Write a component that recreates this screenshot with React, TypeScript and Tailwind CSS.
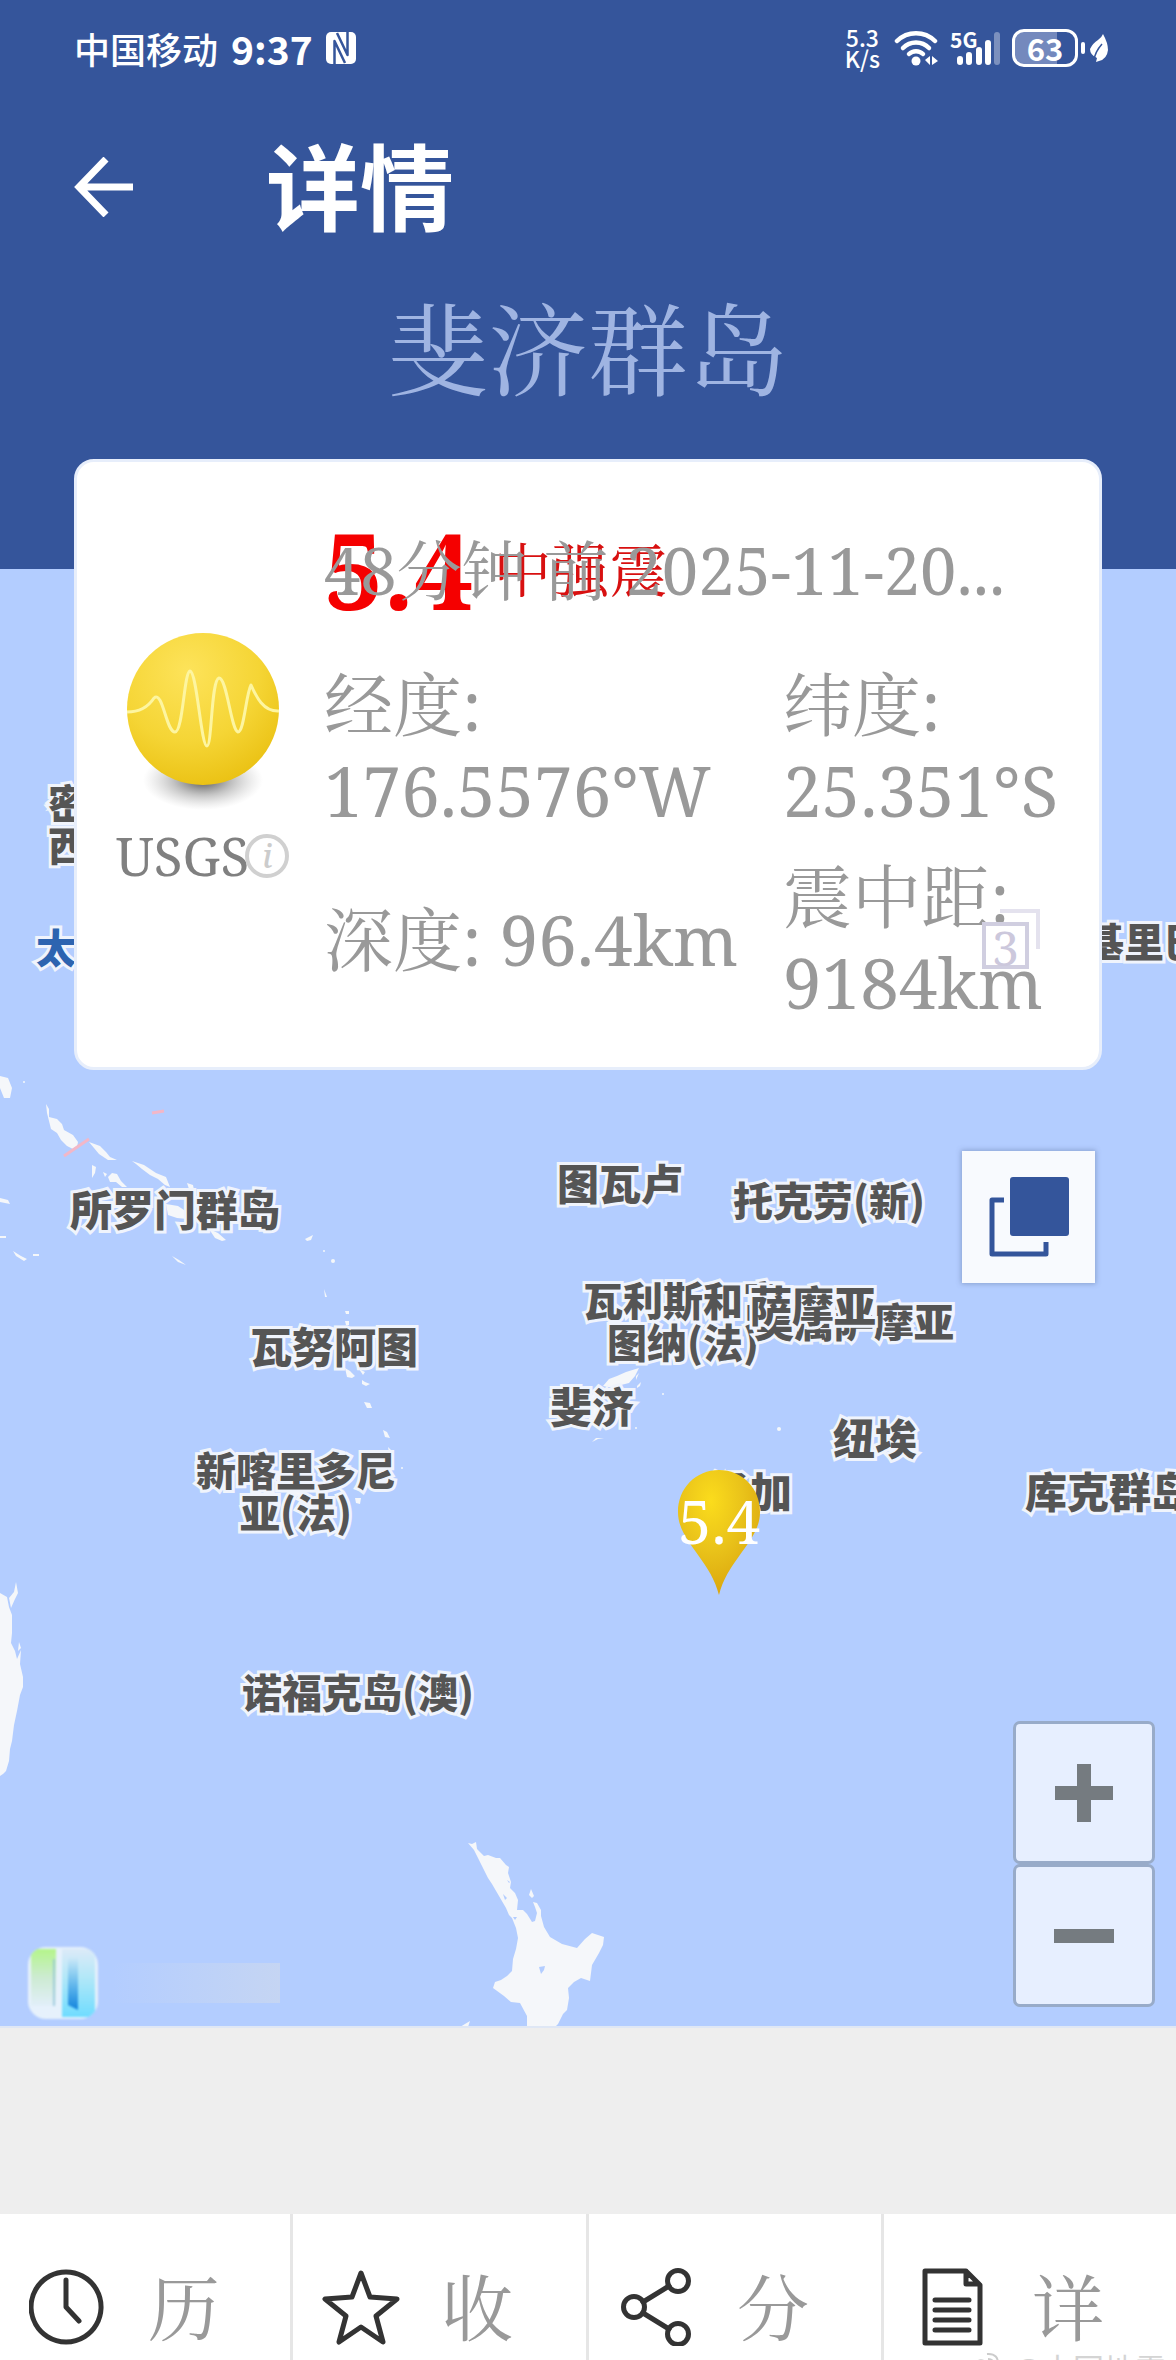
import type { ReactNode } from "react";

const SERIF = "font-['Noto_Serif','Noto_Serif_CJK_SC','Liberation_Serif','Noto_Sans_CJK_SC',serif]";
const SANS = "font-['Noto_Sans_CJK_SC',sans-serif]";

function StatusBar() {
  return (
    <div className={`flex h-[100px] items-center justify-between pr-[68px] pb-[4px] pl-[74px] text-[36px] font-medium text-white ${SANS}`}>
      <div className="flex items-center gap-[13px] leading-[40px]">
        <span>中国移动</span>
        <span className="text-[39px] font-bold">9:37</span>
        <svg viewBox="0 0 30 32" className="h-[32px] w-[30px]" fill="none" aria-label="NFC">
          <rect width="30" height="32" rx="5" fill="white" />
          <path d="M8.500 32V9L19 31M21.500 0v23L11 1" stroke="#35559b" strokeWidth="2.500" strokeLinejoin="round" />
        </svg>
      </div>
      <div className="flex items-center">
        <p className="flex flex-col items-center text-[23px] leading-[21px]">
          <span>5.3</span>
          <span>K/s</span>
        </p>
        <svg viewBox="0 0 44 36" className="ml-[14px] h-[36px] w-[44px]" fill="none" stroke="white" strokeWidth="4.5" strokeLinecap="round" aria-label="Wi-Fi">
          <path d="M3 11a27 27 0 0 1 38 0" />
          <path d="M9 18a18 18 0 0 1 26 0" />
          <path d="M15 24a10 10 0 0 1 14 0" />
          <circle cx="22" cy="31" r="4.5" fill="white" stroke="none" />
          <path d="M36 26v9l-5-5ZM38 35v-9l6 5Z" fill="white" stroke="none" />
        </svg>
        <svg viewBox="0 0 52 36" className="ml-[12px] h-[36px] w-[52px]" aria-label="5G">
          <text x="0" y="18" fill="white" fontSize="21" fontWeight="700" fontFamily="Noto Sans CJK SC, sans-serif">5G</text>
          <g stroke="white" strokeWidth="6" strokeLinecap="round">
            <path d="M10 29v3M19 25v7M29 20v12M38 13v19" />
            <path d="M47 5v27" opacity=".35" />
          </g>
        </svg>
        <div className="ml-[10px] flex items-center gap-[3px]">
          <div className="h-[38px] w-[66px] rounded-[12px] border-[3px] border-white bg-linear-to-r from-[#7489bd] from-70% to-[#35559b] to-70% text-center text-[31px] leading-[31px] font-bold">
            63
          </div>
          <div className="h-[12px] w-[4px] rounded-full bg-white" />
        </div>
        <svg viewBox="0 0 18 30" className="ml-[5px] h-[30px] w-[18px]" aria-label="省电">
          <path d="M13 1q5 9 5 16-1 9-9 11l-3 1 1-4Q0 22 0 16q3-6 8-9 4-3 5-6Z" fill="white" />
          <path d="M4 27Q5 19 12 11" stroke="#35559b" strokeWidth="1.500" fill="none" />
        </svg>
      </div>
    </div>
  );
}

function Header() {
  return (
    <header className="bg-[#35559b] pb-[145px]">
      <StatusBar />
      <div className="flex h-[174px] items-center gap-[132px] px-[74px]">
        <button type="button" aria-label="返回">
          <svg viewBox="0 0 60 60" className="h-[60px] w-[60px]" fill="none" stroke="white" strokeWidth="7">
            <path d="M59 30H6M32 2 5 30l27 28" />
          </svg>
        </button>
        <h1 className={`pb-[8px] text-[94px] leading-[100px] font-bold text-white ${SANS}`}>详情</h1>
      </div>
      <h2 className={`text-center text-[100px] leading-[150px] text-[#9fb4e2] ${SERIF}`}>斐济群岛</h2>
    </header>
  );
}

function QuakeBall() {
  return (
    <svg viewBox="0 0 180 200" className="h-[200px] w-[180px]">
      <defs>
        <radialGradient id="ball" cx=".4" cy=".25" r=".85">
          <stop offset="0" stopColor="#fde35a" />
          <stop offset=".55" stopColor="#f5d535" />
          <stop offset="1" stopColor="#e8bd0c" />
        </radialGradient>
        <radialGradient id="ballShadow">
          <stop offset="0" stopColor="#222" stopOpacity=".8" />
          <stop offset=".5" stopColor="#555" stopOpacity=".35" />
          <stop offset="1" stopColor="#999" stopOpacity="0" />
        </radialGradient>
      </defs>
      <ellipse cx="90" cy="156" rx="60" ry="30" fill="url(#ballShadow)" />
      <circle cx="90" cy="85" r="76" fill="url(#ball)" />
      <path
        d="M14 88Q32 88 41 74C50 66 53 108 62 108 70 108 71 48 77 47 84 48 88 122 94 122 99 122 98 56 106 54 114 54 118 106 125 108 131 108 133 70 138 61 143 72 150 88 166 87"
        fill="none"
        stroke="#fdf5a0"
        strokeWidth="3"
        strokeLinejoin="round"
      />
    </svg>
  );
}

function QuakeCard() {
  return (
    <article className={`relative z-10 mx-[74px] mt-[-110px] flex rounded-[20px] border-[3px] border-[#e7eefb] bg-white text-[#999] ${SERIF}`}>
      <div className="flex w-[247px] shrink-0 flex-col items-center pt-[162px] pl-[4px]">
        <QuakeBall />
        <div className="flex items-center text-[53px] leading-[64px] text-[#808080]">
          <span>USGS</span>
          <button type="button" aria-label="机构信息" className="-ml-[4px] h-[44px] w-[44px] rounded-full border-[4px] border-[#d0d0d0] text-center text-[32px] leading-[34px] font-medium text-[#ccc] italic">
            i
          </button>
        </div>
      </div>
      <div className="min-w-0 flex-1 pt-[65px] pb-[42px]">
        <div className="grid">
          <p className="flex items-center gap-[20px] leading-[86px] text-[#f50000] [grid-area:1/1]">
            <strong className="text-[105px]">5.4</strong>
            <span className="text-[58px] text-[#d81010]">中强震</span>
          </p>
          <p className="text-[65px] leading-[86px] whitespace-nowrap [grid-area:1/1]">48分钟 前 2025-11-20...</p>
        </div>
        <div className="mt-[48px] grid grid-cols-[459px_1fr] items-center gap-y-[20px] text-[69px] leading-[86px]">
          <p>经度: 176.5576°W</p>
          <p>纬度: 25.351°S</p>
          <p className="whitespace-nowrap">深度: 96.4km</p>
          <p>震中距: 9184km</p>
        </div>
      </div>
      <div className="absolute right-[59px] bottom-[98px] h-[60px] w-[58px] text-[#ccc8dc]">
        <div className="absolute top-0 right-0 h-[40px] w-[40px] border-[4px] border-b-0 border-l-0 border-[#e4e2ee]" />
        <div className="absolute bottom-0 left-0 h-[47px] w-[47px] border-[4px] border-[#d0cee0] text-center text-[48px] leading-[44px]">3</div>
      </div>
    </article>
  );
}

function MapLand() {
  return (
    <svg viewBox="0 569 1176 1457" preserveAspectRatio="xMinYMin slice" className="absolute inset-0 h-full w-full" fill="#f5f7fa">
      <path d="m468 1843 4 1 4-2 1 7 7 7 4-1 8 3 4 0 6 7 3 2-1 6 3 9-1 6 5 5 3 7-1 10 6 0 4 4 5 8 3-1 2-8-2-6-2-5 4 1 4 7 0 6 3 11 6 10 12 7 15 4 8-9 7-6 12 4-1 8-4 8-7 12-1 8-1 8-9-3-7 4-6 6 1 10-2 12-4 4-5 10-4 4h-27l0-12-7-13-9-1-7-6-11-8 2-6 6-2 6-4 5-5 1-12 3-10 2-11-2-10-4-10-3-3-3-7-7-12-7-12-4-6-6-12-3-6-2-4-3-6Z" />
      <path d="m531 1889 3 7-2 2-3-3ZM460 2027l10-6-2 6Z" />
      <path d="M0 1593l7 4 2 10 3 8v18l-1 10 4 8 2 8 4-9-1 14 3 13v10l-3 8-3 16-3 14-2 16-2 8-1 12-3 10-3 3-3 2ZM16 1582l2 11-3 6-4 9-2-10 5-6Z" />
      <path d="m19 1642 2 6-3 3Z" />
      <path d="m46 1104 3 5 0 8 8 2 5 5 2 6 9 5 5 7-1 5-4 2-6-3-6-6-4-7-6-4-2-8-2-8Z" />
      <path d="m89 1142 11 4 6 6 4 5 7 3-9 0-9-6-5-6ZM132 1161l12 4 12 8 10 4 4 10-5-2-7-6-8-4-8-6-6-5ZM92 1165l4 2-1 6-3 5ZM103 1172l4 2-2 3ZM108 1177l4-4 5 1 4 7 6 6-5 0-6-5-6 0ZM187 1183l6 2 2 10 3 6 5 10-6-3-5-10ZM166 1204l12 2 9 6 0 7-10-1-9-3ZM209 1229l9 4 8 7-4 1-7-3ZM172 1256l7 4 7 5-8-3ZM305 1239l8-4-2 5-4 1Z" />
      <path d="M0 1076l8 2 4 10-2 10-6 0-4-10ZM0 1198l8 2 2 4-10-2ZM0 1236h6v2H0ZM13 1251l8 5 6 3-3 2-8-5ZM33 1254h6v2h-6Z" />
      <circle cx="24" cy="1082" r="1" />
      <circle cx="324" cy="1251" r="1" />
      <circle cx="333" cy="1261" r="2" />
      <path d="m324 1289 3 8-2 0ZM345 1311h4v3h-3ZM345 1321h4v4h-3ZM345 1368l5 3 5 5-3 2-5-1ZM359 1369l6 3-2 3ZM362 1380l3 2 5 2-4 2-4-2ZM364 1402l6 1 2 5-5 0ZM383 1430l4 2 3 6-5-1ZM388 1447l4 4 0 4-3-2ZM355 1498l6 0-1 6-4-1ZM268 1470l12 6 20 14 6 8-6 0-20-14ZM338 1488l6 2-2 3Z" />
      <circle cx="402" cy="1468" r="1" />
      <path d="m603 1386 6-7 8-3 9-4 13-4-4 8-6 7-8 2-8 3ZM636 1376l3-3-3 7ZM637 1386l4-4-1 4-3 2ZM588 1395l12-2 4 8-3 22-12 0ZM592 1442l4-4 8 0-6 1Z" />
      <circle cx="663" cy="1394" r="1" />
      <circle cx="779" cy="1429" r="2" />
      <circle cx="636" cy="1428" r="1" />
      <path d="m539 1967 6-1-1 4-3 4ZM507 1880l3 2-1 1ZM503 1894l4 4-2 2ZM513 1917l4 0-2 3Z" fill="#b3cdff" />
      <path d="m64 1156 25-17M152 1113l12-2" stroke="#f2b7c8" strokeWidth="3" fill="none" />
    </svg>
  );
}

function Label({ at, children }: { at: string; children: ReactNode }) {
  return (
    <p className={`absolute text-center leading-[42px] font-black whitespace-nowrap text-[#555] [-webkit-text-stroke:6px_#f0f4fc] [paint-order:stroke_fill] ${SANS} ${at}`}>
      {children}
    </p>
  );
}

function MapCanvas() {
  return (
    <div className="absolute inset-0 overflow-hidden border-b-2 border-[#dfe7f5] bg-[#b3cdff]">
      <MapLand />
      <Label at="left-[48px] top-[212px] text-[40px]">密克罗尼<br />西亚联邦</Label>
      <Label at="left-[36px] top-[356px] text-[40px] text-[#2d64b0]!">太平洋</Label>
      <Label at="left-[1084px] top-[350px] text-[40px]">基里巴斯</Label>
      <Label at="left-[70px] top-[618px] text-[42px]">所罗门群岛</Label>
      <Label at="left-[557px] top-[592px] text-[42px]">图瓦卢</Label>
      <Label at="left-[733px] top-[609px] text-[40px]">托克劳(新)</Label>
      <Label at="left-[250px] top-[755px] text-[42px]">瓦努阿图</Label>
      <Label at="left-[583px] top-[709px] text-[40px]">瓦利斯和富<br />图纳(法)</Label>
      <Label at="left-[754px] top-[730px] text-[40px]">美属萨摩亚</Label>
      <Label at="left-[750px] top-[714px] text-[42px]">萨摩亚</Label>
      <Label at="left-[550px] top-[815px] text-[42px]">斐济</Label>
      <Label at="left-[833px] top-[847px] text-[42px]">纽埃</Label>
      <Label at="left-[196px] top-[879px] text-[40px]">新喀里多尼<br />亚(法)</Label>
      <Label at="left-[708px] top-[900px] text-[42px]">汤加</Label>
      <Label at="left-[1025px] top-[900px] text-[42px]">库克群岛</Label>
      <Label at="left-[242px] top-[1101px] text-[40px]">诺福克岛(澳)</Label>

      <div className="absolute top-[900px] left-[678px] h-[128px] w-[82px]">
        <svg viewBox="0 0 82 128" className="absolute inset-0">
          <defs>
            <radialGradient id="pin" cx=".4" cy=".25" r=".8">
              <stop offset="0" stopColor="#fbdc1c" />
              <stop offset=".5" stopColor="#e9c21a" />
              <stop offset="1" stopColor="#d9a30c" />
            </radialGradient>
          </defs>
          <path d="M41 1C64 1 82 19 82 43 82 72 50 90 41 126 32 90 0 72 0 43 0 19 18 1 41 1Z" fill="url(#pin)" />
        </svg>
        <span className={`relative flex h-[104px] items-center justify-center text-[60px] text-white ${SERIF}`}>5.4</span>
      </div>

      <div className="absolute bottom-[7px] left-[28px] flex items-center gap-[14px]">
        <svg viewBox="0 0 70 72" className="h-[72px] w-[70px] blur-[1px]">
          <defs>
            <linearGradient id="logoLeft" x2="0" y2="1">
              <stop offset="0" stopColor="#b4f58a" />
              <stop offset=".5" stopColor="#cdebd2" />
              <stop offset="1" stopColor="#e2effa" />
            </linearGradient>
            <linearGradient id="logoRight" x2="0" y2="1">
              <stop offset="0" stopColor="#dceaf8" />
              <stop offset=".4" stopColor="#b4e8f8" />
              <stop offset="1" stopColor="#6fdcff" />
            </linearGradient>
            <linearGradient id="logoStripe" x2="0" y2="1">
              <stop offset="0" stopColor="#3d9be5" stopOpacity="0" />
              <stop offset="1" stopColor="#1583dc" />
            </linearGradient>
            <clipPath id="logoShape"><rect width="70" height="72" rx="18" /></clipPath>
          </defs>
          <g clipPath="url(#logoShape)">
            <rect width="70" height="72" fill="#e6f1fc" />
            <rect x="3" y="2" width="25" height="57" fill="url(#logoLeft)" />
            <path d="M26 12v47" stroke="#8cc0d8" strokeWidth="2" opacity=".7" />
            <rect x="34" y="2" width="33" height="68" fill="url(#logoRight)" />
            <path d="M40 10h10v53l-10-5Z" fill="url(#logoStripe)" />
          </g>
        </svg>
        <div className="h-[40px] w-[168px] bg-linear-to-r from-[#b3cdff] to-[#c5d5f3]" />
      </div>
    </div>
  );
}

function MapControls() {
  const zoomButton = "flex h-[143px] w-[142px] items-center justify-center rounded-[7px] border-[3px] border-[#98abc9] bg-[#e7efff]";
  return (
    <div className="absolute right-[21px] bottom-[21px] flex flex-col items-end">
      <button type="button" aria-label="图层" className="mr-[60px] mb-[438px] flex h-[132px] w-[133px] items-center justify-center bg-[#f8fafe] shadow-[0_0_5px_1px_rgba(90,110,150,0.45)]">
        <svg viewBox="0 0 80 80" className="h-[80px] w-[80px]">
          <rect x="21" y="0" width="59" height="59" rx="3" fill="#34559b" />
          <path d="M15 23H3v54h54V65" fill="none" stroke="#34559b" strokeWidth="5" strokeLinejoin="round" />
        </svg>
      </button>
      <button type="button" aria-label="放大" className={zoomButton}>
        <svg viewBox="0 0 60 60" className="h-[60px] w-[60px]"><path d="M30 1v58M1 30h58" stroke="#757b80" strokeWidth="14" /></svg>
      </button>
      <button type="button" aria-label="缩小" className={zoomButton}>
        <svg viewBox="0 0 60 60" className="h-[60px] w-[60px]"><path d="M0 30h60" stroke="#757b80" strokeWidth="14" /></svg>
      </button>
    </div>
  );
}

const actions: { label: string; icon: ReactNode }[] = [
  { label: "历", icon: <path d="M37 4a35 35 0 1 0 .1 0ZM37 12v27l13 14" /> },
  { label: "收", icon: <path d="M39 5l9 24 27 2-21 17 7 26-22-15-22 15 7-26L3 31l27-2Z" /> },
  {
    label: "分",
    icon: (
      <>
        <circle cx="16" cy="39" r="10.500" />
        <circle cx="60" cy="13" r="10.500" />
        <circle cx="60" cy="66" r="10.500" />
        <path d="m25 34 26-16M25 45l26 16" />
      </>
    ),
  },
  { label: "详", icon: <path d="M12 3h41l14 14v58H12ZM53 3v13h13M22 32h34M22 42h34M22 52h34M22 62h34" /> },
];

function ActionBar() {
  return (
    <footer className="relative overflow-hidden bg-white">
      <nav className="grid grid-cols-[293fr_296fr_295fr_292fr]">
        {actions.map((a) => (
          <button
            key={a.label}
            type="button"
            className={`flex items-center gap-[41px] border-r-[3px] border-[#e6e6e6] pt-[54px] pb-[14px] pl-[29px] text-[72px] leading-[78px] text-[#999] last:border-r-0 ${SERIF}`}
          >
            <svg viewBox="0 0 78 78" className="h-[78px] w-[78px]" fill="none" stroke="#333" strokeWidth="5" strokeLinecap="round" strokeLinejoin="round">
              {a.icon}
            </svg>
            <span>{a.label}</span>
          </button>
        ))}
      </nav>
      <p className={`absolute top-[134px] right-[10px] flex items-start gap-[12px] text-[31px] leading-[40px] whitespace-nowrap text-[#d4d4d4] ${SANS}`}>
        <svg viewBox="0 0 30 24" className="mt-[4px] h-[24px] w-[30px]" fill="none" stroke="#ccc" strokeWidth="2">
          <path d="M16 2q12-1 11 12M17 7q6 0 5 6M2 16Q6 6 13 9v4" />
        </svg>
        @中国地震
      </p>
    </footer>
  );
}

export default function App() {
  return (
    <div className="flex min-h-screen flex-col bg-[#eee]">
      <Header />
      <main className="relative flex h-[1459px] flex-col">
        <MapCanvas />
        <QuakeCard />
        <MapControls />
      </main>
      <div className="min-h-[184px] flex-1" />
      <ActionBar />
    </div>
  );
}
